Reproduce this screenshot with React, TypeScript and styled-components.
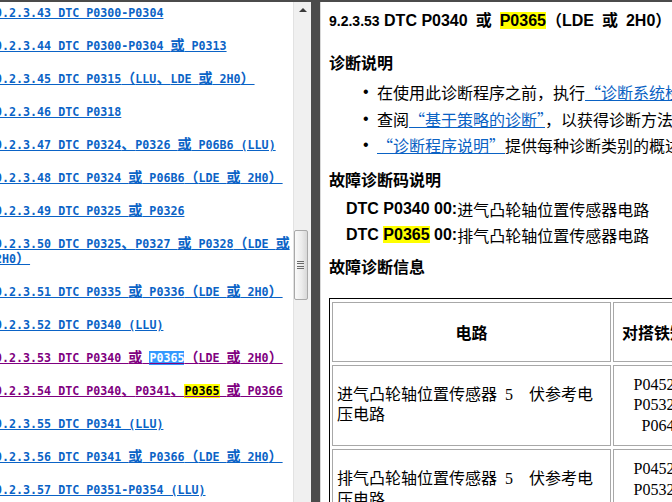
import React from 'react'
import styled, { createGlobalStyle } from 'styled-components'

const GlobalStyle = createGlobalStyle`
  html, body {
    margin: 0;
    padding: 0;
    background: #fff;
  }
  body {
    font-family: "Liberation Sans", "Noto Sans CJK SC", sans-serif;
    color: #000;
  }
`

type Seg = string | { sel?: string; find?: string }
type NavEntry = { parts: Seg[]; visited?: boolean }

const NAV: NavEntry[] = [
  { parts: ['9.2.3.43 DTC P0300-P0304'] },
  { parts: ['9.2.3.44 DTC P0300-P0304 或 P0313'] },
  { parts: ['9.2.3.45 DTC P0315（LLU、LDE 或 2H0）'] },
  { parts: ['9.2.3.46 DTC P0318'] },
  { parts: ['9.2.3.47 DTC P0324、P0326 或 P06B6 (LLU)'] },
  { parts: ['9.2.3.48 DTC P0324 或 P06B6（LDE 或 2H0）'] },
  { parts: ['9.2.3.49 DTC P0325 或 P0326'] },
  { parts: ['9.2.3.50 DTC P0325、P0327 或 P0328（LDE 或 2H0）'] },
  { parts: ['9.2.3.51 DTC P0335 或 P0336（LDE 或 2H0）'] },
  { parts: ['9.2.3.52 DTC P0340 (LLU)'] },
  { parts: ['9.2.3.53 DTC P0340 或 ', { sel: 'P0365' }, '（LDE 或 2H0）'], visited: true },
  { parts: ['9.2.3.54 DTC P0340、P0341、', { find: 'P0365' }, ' 或 P0366'], visited: true },
  { parts: ['9.2.3.55 DTC P0341 (LLU)'] },
  { parts: ['9.2.3.56 DTC P0341 或 P0366（LDE 或 2H0）'] },
  { parts: ['9.2.3.57 DTC P0351-P0354 (LLU)'] },
]

const Frame = styled.div`
  display: flex;
  width: 672px;
  height: 502px;
  border-top: 2px solid #4b4b4b;
  box-sizing: border-box;
  overflow: hidden;
`

/* ---------- left: table of contents ---------- */

const NavPane = styled.div`
  width: 293px;
  flex-shrink: 0;
  overflow: hidden;
  background: #fff;
`

const NavList = styled.div`
  margin-left: -5px;
  width: 298px;
  padding-top: 4px;
  font-family: "DejaVu Sans Mono", "Noto Sans CJK SC", monospace;
  font-weight: bold;
  font-size: 11.67px;
  line-height: 15px;
`

const NavItem = styled.p`
  margin: 0 0 18px;
`

const NavLink = styled.a<{ $visited?: boolean }>`
  color: ${(p) => (p.$visited ? '#800080' : '#0b63c6')};
  text-decoration: underline;
  cursor: pointer;
`

const Wide = styled.span`
  font-family: "Noto Sans CJK SC", sans-serif;
  font-size: 14px;
  line-height: 0;
`

const Selected = styled.span`
  background: #3399ff;
  color: #fff;
`

const Found = styled.span`
  background: #ffff00;
  color: #000;
`

const cjk = /([\u3000-\u303f\u4e00-\u9fff\uff00-\uffef]+)/

function mixed(text: string) {
  return text.split(cjk).map((part, i) => (cjk.test(part) ? <Wide key={i}>{part}</Wide> : part))
}

/* ---------- scrollbar + splitter ---------- */

const ScrollTrack = styled.div`
  width: 18px;
  flex-shrink: 0;
  box-sizing: border-box;
  background: #f0f0f0;
  border-left: 1px solid #e2e2e2;
  display: flex;
  flex-direction: column;
  align-items: flex-start;
`

const ArrowUp = styled.div`
  align-self: center;
  margin-top: 6px;
  width: 0;
  height: 0;
  border-left: 4px solid transparent;
  border-right: 4px solid transparent;
  border-bottom: 4px solid #3a3a3a;
`

const Thumb = styled.div`
  margin-top: 218px;
  width: 14px;
  height: 70px;
  box-sizing: border-box;
  border: 1px solid #a9a9a9;
  border-radius: 2px;
  background: linear-gradient(to right, #fafafa, #ececec 55%, #d8d8d8);
  display: flex;
  align-items: center;
  justify-content: center;
`

const Grip = styled.div`
  width: 7px;
  height: 9px;
  margin-right: 1px;
  background: repeating-linear-gradient(to bottom, #6a6a6a 0 1px, transparent 1px 2.5px);
`

const Splitter = styled.div`
  width: 9px;
  flex-shrink: 0;
  background: #4b4b4b;
`

/* ---------- right: document ---------- */

const DocPane = styled.div`
  flex: 1;
  overflow: hidden;
  background: #fff;
  border-left: 1px solid #d8d8d8;
  padding-left: 8px;
`

const DocBody = styled.div`
  width: 900px;
`

const Title = styled.h1`
  margin: 8px 0 0;
  font-size: 16px;
  line-height: 22px;
  font-weight: bold;
  white-space: nowrap;
`

const TitleNum = styled.span`
  font-size: 14px;
`

const Mark = styled.span`
  background: #ffff00;
`

const SectionTitle = styled.h2<{ $gap: number }>`
  margin: ${(p) => p.$gap}px 0 0;
  font-family: "Noto Sans CJK SC", sans-serif;
  font-size: 16px;
  line-height: 22px;
  font-weight: bold;
`

const Bullets = styled.ul`
  margin: 6px 0 0;
  padding: 0 0 0 34px;
  list-style: none;
  font-family: "Noto Sans CJK SC", sans-serif;
  font-size: 16px;
  white-space: nowrap;
`

const Bullet = styled.li`
  display: flex;
  align-items: center;
  height: 26.5px;
`

const Dot = styled.span`
  width: 14px;
  flex-shrink: 0;
  font-family: "Liberation Sans", sans-serif;
`

const DocLink = styled.a`
  color: #0a62c4;
  text-decoration: underline;
  cursor: pointer;
`

const CodeLines = styled.div`
  margin-top: 6px;
  padding-left: 17px;
  font-size: 16px;
  white-space: nowrap;
`

const CodeLine = styled.div`
  display: flex;
  align-items: center;
  height: 26px;
`

const Code = styled.b`
  font-family: "Liberation Sans", sans-serif;
`

const Desc = styled.span`
  font-family: "Noto Sans CJK SC", sans-serif;
`

const Grid = styled.table`
  margin-top: 21px;
  width: 771px;
  table-layout: fixed;
  border: 1px solid #000;
  border-spacing: 2px 3px;
  font-family: "Liberation Serif", "Noto Sans CJK SC", serif;
  font-size: 16px;
`

const Head = styled.th<{ $w: number }>`
  width: ${(p) => p.$w}px;
  box-sizing: border-box;
  border: 1px solid #a8a8a8;
  padding: 19px 4px;
  font-family: "Noto Sans CJK SC", sans-serif;
  font-weight: bold;
  line-height: 20px;
  text-align: center;
  vertical-align: middle;
`

const Cell = styled.td<{ $center?: boolean; $pad?: number }>`
  box-sizing: border-box;
  border: 1px solid #a8a8a8;
  padding: 9px ${(p) => p.$pad ?? 4}px;
  line-height: 20.5px;
  text-align: ${(p) => (p.$center ? 'center' : 'left')};
  vertical-align: middle;
`

const ROWS = [
  {
    circuit: '进气凸轮轴位置传感器\u00a0\u00a05\u00a0\u00a0\u00a0\u00a0伏参考电压电路',
    cols: ['P0452、P0532、P0641', 'P0340', 'P0340、P0641', '1'],
  },
  {
    circuit: '排气凸轮轴位置传感器\u00a0\u00a05\u00a0\u00a0\u00a0\u00a0伏参考电压电路',
    cols: ['P0452、P0532、P0651', 'P0365', 'P0365、P0651', '1'],
  },
]

export default function App() {
  return (
    <>
      <GlobalStyle />
      <Frame lang="zh-CN">
        <NavPane>
          <NavList>
            {NAV.map((n, i) => (
              <NavItem key={i}>
                <NavLink $visited={n.visited}>
                  {n.parts.map((s, j) =>
                    typeof s === 'string' ? (
                      <React.Fragment key={j}>{mixed(s)}</React.Fragment>
                    ) : s.sel ? (
                      <Selected key={j}>{s.sel}</Selected>
                    ) : (
                      <Found key={j}>{s.find}</Found>
                    )
                  )}
                </NavLink>
              </NavItem>
            ))}
          </NavList>
        </NavPane>

        <ScrollTrack>
          <ArrowUp />
          <Thumb>
            <Grip />
          </Thumb>
        </ScrollTrack>
        <Splitter />

        <DocPane>
          <DocBody>
            <Title>
              <TitleNum>9.2.3.53</TitleNum> DTC P0340{'\u2002'}或{'\u2002'}
              <Mark>P0365</Mark>（LDE{'\u2002'}或{'\u2002'}2H0）
            </Title>

            <SectionTitle $gap={19}>诊断说明</SectionTitle>
            <Bullets>
              <Bullet>
                <Dot>•</Dot>
                <span>
                  在使用此诊断程序之前，执行<DocLink>“诊断系统检查 - 车辆”</DocLink>，以便对诊断方法进行概述。
                </span>
              </Bullet>
              <Bullet>
                <Dot>•</Dot>
                <span>
                  查阅<DocLink>“基于策略的诊断”</DocLink>，以获得诊断方法的概述。
                </span>
              </Bullet>
              <Bullet>
                <Dot>•</Dot>
                <span>
                  <DocLink>“诊断程序说明”</DocLink>提供每种诊断类别的概述。
                </span>
              </Bullet>
            </Bullets>

            <SectionTitle $gap={9}>故障诊断码说明</SectionTitle>
            <CodeLines>
              <CodeLine>
                <Code>DTC P0340 00:</Code>
                <Desc>进气凸轮轴位置传感器电路</Desc>
              </CodeLine>
              <CodeLine>
                <Code>
                  DTC <Mark>P0365</Mark> 00:
                </Code>
                <Desc>排气凸轮轴位置传感器电路</Desc>
              </CodeLine>
            </CodeLines>

            <SectionTitle $gap={7}>故障诊断信息</SectionTitle>
            <Grid>
              <thead>
                <tr>
                  <Head $w={279}>电路</Head>
                  <Head $w={98}>对搭铁短路</Head>
                  <Head $w={140}>开路/电阻过大</Head>
                  <Head $w={120}>对电压短路</Head>
                  <Head $w={120}>信号性能</Head>
                </tr>
              </thead>
              <tbody>
                {ROWS.map((r, i) => (
                  <tr key={i}>
                    <Cell>{r.circuit}</Cell>
                    {r.cols.map((c, j) => (
                      <Cell key={j} $center $pad={8}>
                        {c}
                      </Cell>
                    ))}
                  </tr>
                ))}
              </tbody>
            </Grid>
          </DocBody>
        </DocPane>
      </Frame>
    </>
  )
}
